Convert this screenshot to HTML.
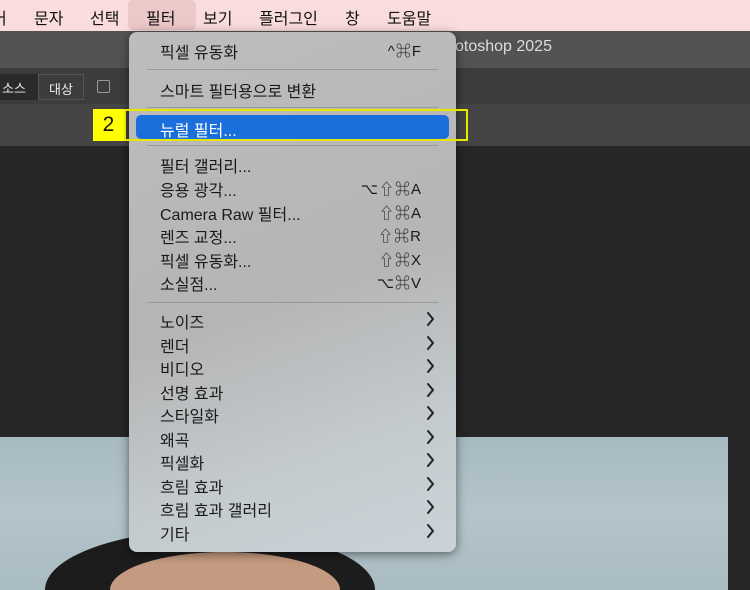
<!DOCTYPE html>
<html><head><meta charset="utf-8"><style>
*{margin:0;padding:0;box-sizing:border-box}
html,body{width:750px;height:590px;overflow:hidden}
body{position:relative;background:#262626;font-family:"Liberation Sans","Noto Sans CJK KR",sans-serif}
#w{position:absolute;left:0;top:0;width:750px;height:590px;overflow:hidden}
.abs{position:absolute}
.mb{left:0;top:0;width:750px;height:31px;background:#fbdcdc;font-size:16px;color:#111}
.mb span{position:absolute;top:5px}
.menu{left:129px;top:32px;width:327px;height:520px;border-radius:8px;background:linear-gradient(160deg,#bdbdbd 0%,#b5b5b5 50%,#c5ccd0 80%,#c9d3d7 100%);box-shadow:0 2px 10px rgba(0,0,0,.5)}
.it{position:absolute;left:31px;font-size:16px;color:#1a1a1a}
.sc{position:absolute;right:34px;font-size:15px;color:#1a1a1a;letter-spacing:1px}
.sep{position:absolute;left:18px;width:291px;height:1px;background:#9a9a9a}
</style></head><body><div id="w">
<div class="abs mb">
<span style="left:-8px">어</span><span style="left:34px">문자</span><span style="left:90px">선택</span>
<div class="abs" style="left:128px;top:0;width:68px;height:30px;background:#ecc8c8;border-radius:5px"></div>
<span style="left:146px">필터</span><span style="left:203px">보기</span><span style="left:259px">플러그인</span><span style="left:345px">창</span><span style="left:387px">도움말</span>
</div>
<div class="abs" style="left:0;top:31px;width:750px;height:37px;background:#535353"></div>
<div class="abs" style="left:455px;top:38px;color:#ddd;font-size:16px">otoshop 2025</div>
<div class="abs" style="left:0;top:68px;width:750px;height:36px;background:#3c3c3c"></div>
<div class="abs" style="left:0;top:74px;width:38px;height:26px;background:#2a2a2a;color:#eee;font-size:13px;padding:4px 0 0 2px">소스</div>
<div class="abs" style="left:38px;top:74px;width:46px;height:26px;border:1px solid #555;color:#eee;font-size:13px;padding:4px 0 0 10px">대상</div>
<div class="abs" style="left:97px;top:80px;width:13px;height:13px;border:1px solid #999;border-radius:2px"></div>
<div class="abs" style="left:0;top:104px;width:750px;height:42px;background:#444"></div>
<div class="abs" style="left:0;top:146px;width:750px;height:444px;background:#262626"></div>
<div class="abs" style="left:0;top:437px;width:728px;height:153px;background:linear-gradient(180deg,#a7bac1,#b3c4ca 50%,#a9bcc2)"></div>
<div class="abs" style="left:45px;top:530px;width:330px;height:60px;border-radius:165px 165px 0 0/60px 60px 0 0;background:#1c1c1c"></div>
<div class="abs" style="left:110px;top:552px;width:230px;height:38px;border-radius:115px 115px 0 0/38px 38px 0 0;background:#c49a80"></div>
<div class="abs menu">
<div class="it" style="top:7px">픽셀 유동화</div><div class="sc" style="top:8px">^⌘F</div>
<div class="sep" style="top:37px"></div>
<div class="it" style="top:46px">스마트 필터용으로 변환</div>
<div class="sep" style="top:75px"></div>
<div class="abs" style="left:7px;top:83px;width:313px;height:24px;background:#1a6fdc;border-radius:5px"></div>
<div class="it" style="top:85px;color:#fff">뉴럴 필터...</div>
<div class="sep" style="top:113px"></div>
<div class="it" style="top:121px">필터 갤러리...</div>
<div class="it" style="top:145px">응용 광각...</div><div class="sc" style="top:146px">⌥⇧⌘A</div>
<div class="it" style="top:169px">Camera Raw 필터...</div><div class="sc" style="top:170px">⇧⌘A</div>
<div class="it" style="top:192px">렌즈 교정...</div><div class="sc" style="top:193px">⇧⌘R</div>
<div class="it" style="top:216px">픽셀 유동화...</div><div class="sc" style="top:217px">⇧⌘X</div>
<div class="it" style="top:239px">소실점...</div><div class="sc" style="top:240px">⌥⌘V</div>
<div class="sep" style="top:270px"></div>
<div class="it" style="top:277px">노이즈</div>
<div class="it" style="top:301px">렌더</div>
<div class="it" style="top:324px">비디오</div>
<div class="it" style="top:348px">선명 효과</div>
<div class="it" style="top:371px">스타일화</div>
<div class="it" style="top:395px">왜곡</div>
<div class="it" style="top:418px">픽셀화</div>
<div class="it" style="top:442px">흐림 효과</div>
<div class="it" style="top:465px">흐림 효과 갤러리</div>
<div class="it" style="top:489px">기타</div>
<svg class="abs" style="left:297px;top:0" width="12" height="520" fill="none" stroke="#222" stroke-width="2" stroke-linecap="round" stroke-linejoin="round">
<path d="M2 281l5 6-5 6M2 305l5 6-5 6M2 328l5 6-5 6M2 352l5 6-5 6M2 375l5 6-5 6M2 399l5 6-5 6M2 422l5 6-5 6M2 446l5 6-5 6M2 469l5 6-5 6M2 493l5 6-5 6"/>
</svg>
</div>
<div class="abs" style="left:124px;top:109px;width:344px;height:32px;border:2px solid #e6e600"></div>
<div class="abs" style="left:93px;top:109px;width:31px;height:32px;background:#ffff00;color:#111;font-size:21px;text-align:center;line-height:32px">2</div>
</div></body></html>
